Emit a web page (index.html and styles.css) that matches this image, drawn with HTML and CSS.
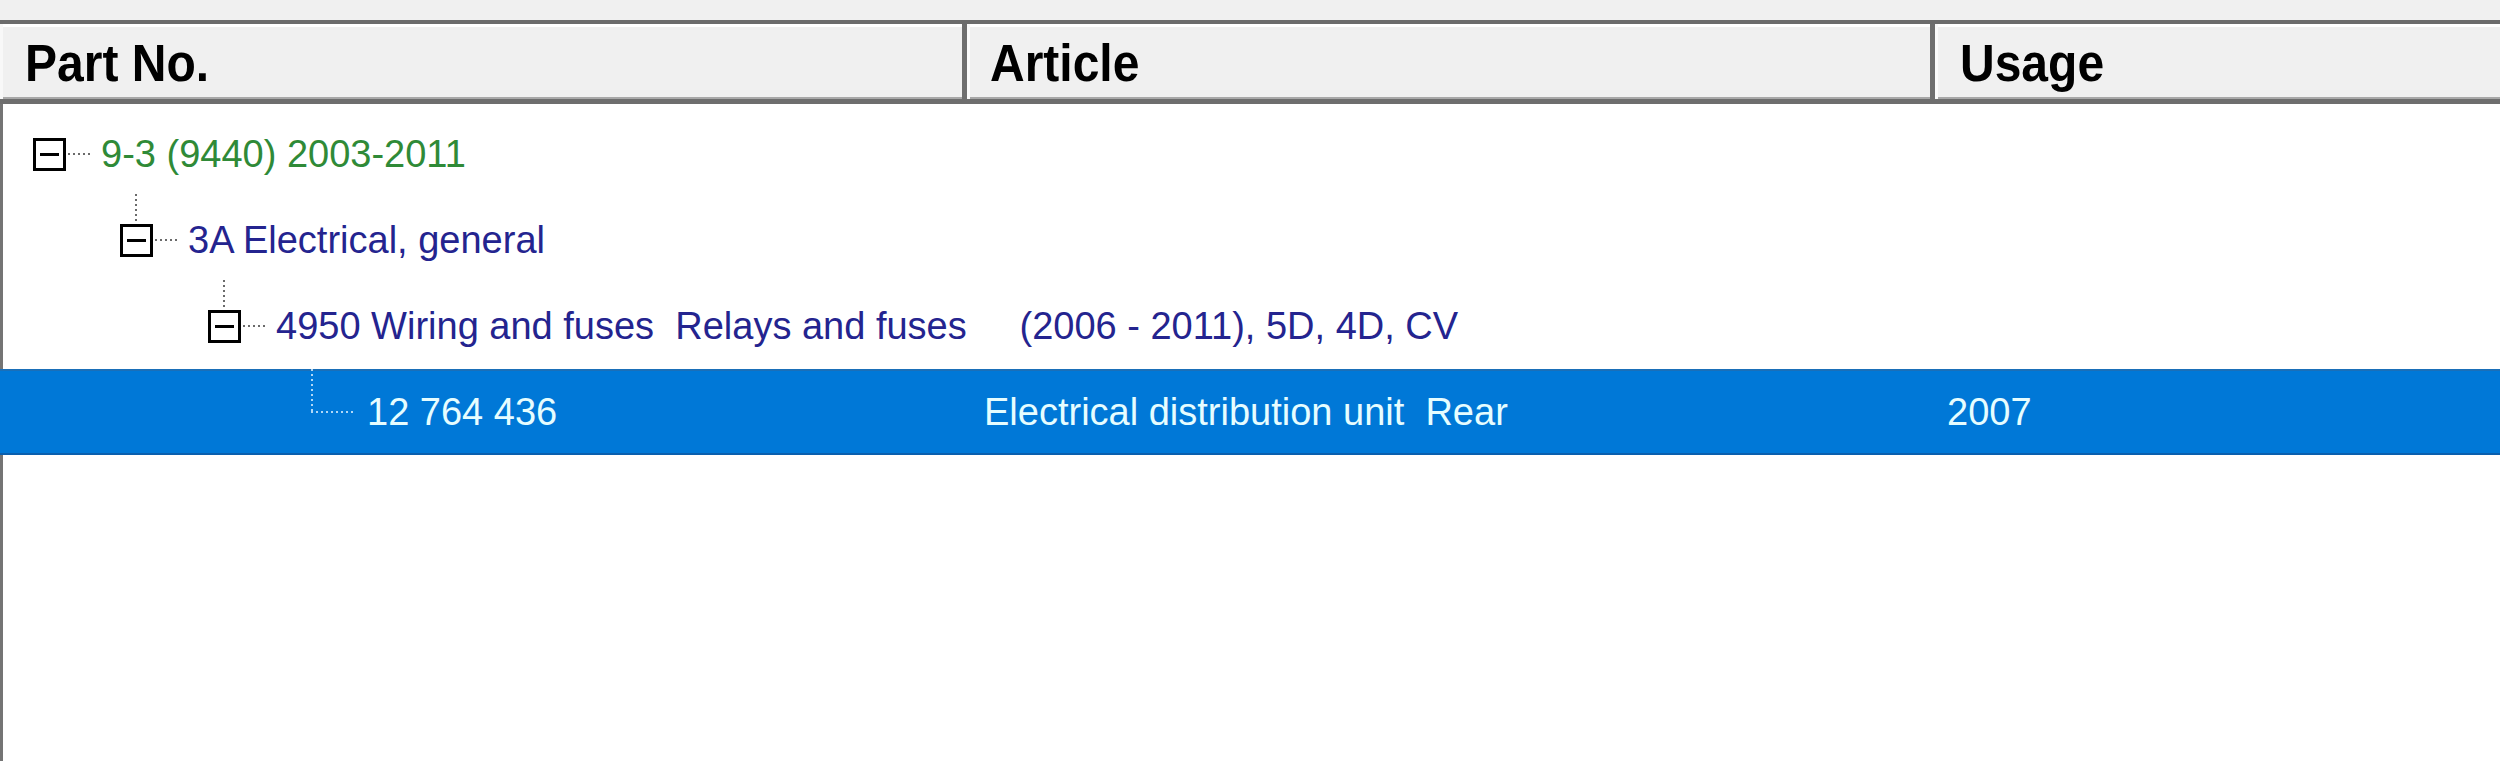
FILE: index.html
```html
<!DOCTYPE html>
<html>
<head>
<meta charset="utf-8">
<link rel="stylesheet" href="styles.css">
</head>
<body>
<div class="top-strip"></div>
<div class="listview">
  <div class="header">
    <div class="hcell hc1"><span class="htext">Part No.</span></div>
    <div class="hcell hc2"><span class="htext">Article</span></div>
    <div class="hcell hc3"><span class="htext">Usage</span></div>
  </div>
  <div class="body">
    <div class="row lvl0">
      <div class="exp"></div>
      <div class="hdots"></div>
      <span class="label green">9-3 (9440) 2003-2011</span>
    </div>
    <div class="row lvl1">
      <div class="exp"><div class="vdots"></div></div>
      <div class="hdots"></div>
      <span class="label navy">3A Electrical, general</span>
    </div>
    <div class="row lvl2">
      <div class="exp"><div class="vdots"></div></div>
      <div class="hdots"></div>
      <span class="label navy">4950 Wiring and fuses  Relays and fuses     (2006 - 2011), 5D, 4D, CV</span>
    </div>
    <div class="row selected">
      <div class="cell c1">
        <div class="leaf"></div>
        <span class="label">12 764 436</span>
      </div>
      <div class="cell c2"><span class="label">Electrical distribution unit  Rear</span></div>
      <div class="cell c3"><span class="label">2007</span></div>
    </div>
  </div>
</div>
</body>
</html>
```

FILE: styles.css
```css
html, body {
  margin: 0;
  padding: 0;
  background: #f0f0f0;
  width: 2500px;
  height: 761px;
  overflow: hidden;
}

.top-strip {
  height: 20px;
  background: #f0f0f0;
}

.listview {
  display: flex;
  flex-direction: column;
  height: 741px;
}

.header {
  display: grid;
  grid-template-columns: 967px 968px 1fr;
  height: 75px;
  border-top: 4px solid #6c6c6c;
  border-bottom: 5px solid #6e6e6e;
  background: #f0f0f0;
  box-shadow: inset 0 3px 0 #ffffff, inset 0 -2px 0 #a8a8a8;
}

.hcell {
  display: flex;
  align-items: center;
  font-family: "Liberation Sans", Arial, sans-serif;
  font-weight: bold;
  font-size: 48px;
  color: #000;
  box-sizing: border-box;
  border-left: 3px solid #fafafa;
  border-right: 5px solid #6e6e6e;
  padding-top: 4px;
}

.htext {
  display: inline-block;
  transform: scaleY(1.08);
  line-height: 1;
}

.hc1 { padding-left: 22px; border-left-color: #f8f8f8; }
.hc2 { padding-left: 20px; }
.hc3 { padding-left: 22px; border-right: none; }

.body {
  flex: 1;
  background: #ffffff;
  border-left: 3px solid #747474;
  padding-top: 7px;
  font-family: "Liberation Sans", Arial, sans-serif;
  font-size: 38px;
}

.row {
  display: flex;
  align-items: center;
  height: 86px;
  white-space: pre;
}

.lvl0 { padding-left: 30px; }
.lvl1 { padding-left: 117px; }
.lvl2 { padding-left: 205px; }

.exp {
  position: relative;
  flex: none;
  width: 33px;
  height: 33px;
  box-sizing: border-box;
  border: 3px solid #000;
  background: #fff;
  display: flex;
  align-items: center;
  justify-content: center;
}

.exp::after {
  content: "";
  width: 19px;
  height: 3px;
  background: #000;
}

.vdots {
  position: absolute;
  left: 12px;
  bottom: 33px;
  width: 2px;
  height: 27px;
  background: repeating-linear-gradient(to bottom, #6a6a6a 0 2px, transparent 2px 5px);
}

.hdots {
  flex: none;
  width: 25px;
  height: 2px;
  margin: 0 8px 0 2px;
  background: repeating-linear-gradient(to right, #6a6a6a 0 2px, transparent 2px 5px);
}

.label {
  line-height: 1;
}

.green { color: #2f8a37; }
.navy { color: #24248f; }

.selected {
  display: grid;
  grid-template-columns: 964px 968px 1fr;
  background: #0078d7;
  box-shadow: inset 0 2px 0 #1a6fb8, inset 0 -2px 0 #0a5fae;
  color: #e6fdff;
  margin-left: -3px;
}

.cell {
  display: flex;
  align-items: center;
  height: 100%;
}

.c1 { padding-left: 311px; }
.c2 { padding-left: 20px; }
.c3 { padding-left: 15px; }

.leaf {
  flex: none;
  align-self: flex-start;
  width: 44px;
  height: 44px;
  margin-right: 12px;
  background:
    repeating-linear-gradient(to bottom, rgba(220,240,255,0.8) 0 2px, transparent 2px 5px) left top / 2px 44px no-repeat,
    repeating-linear-gradient(to right, rgba(220,240,255,0.8) 0 2px, transparent 2px 5px) left bottom / 44px 2px no-repeat;
}
```
